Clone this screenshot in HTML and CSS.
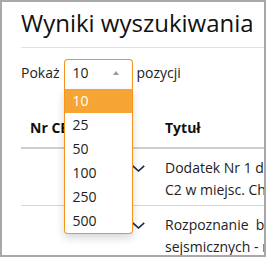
FILE: index.html
```html
<!DOCTYPE html>
<html lang="pl">
<head>
<meta charset="utf-8">
<title>Wyniki wyszukiwania</title>
<link rel="stylesheet" href="styles.css">
</head>
<body>
<main class="page">
  <h1 class="title">Wyniki wyszukiwania</h1>
  <div class="controls">
    <span class="label">Pokaż</span>
    <div class="select">
      <span class="select-value">10</span>
      <span class="caret"></span>
      <ul class="options">
        <li class="option active">10</li>
        <li class="option">25</li>
        <li class="option">50</li>
        <li class="option">100</li>
        <li class="option">250</li>
        <li class="option">500</li>
      </ul>
    </div>
    <span class="label">pozycji</span>
  </div>
  <div class="table">
    <div class="row head">
      <div class="cell first">Nr CBDG</div>
      <div class="cell">Tytuł</div>
    </div>
    <div class="row">
      <div class="cell first toggle">
        <svg class="chev" width="13" height="7" viewBox="0 0 13 7"><polyline points="0.8,0.8 6.5,6 12.2,0.8" fill="none" stroke="#1c2744" stroke-width="1.6"/></svg>
      </div>
      <div class="cell">Dodatek Nr 1 do projektu robót geologicznych<br>C2 w miejsc. Chrzanów</div>
    </div>
    <div class="row">
      <div class="cell first toggle">
        <svg class="chev" width="13" height="7" viewBox="0 0 13 7"><polyline points="0.8,0.8 6.5,6 12.2,0.8" fill="none" stroke="#1c2744" stroke-width="1.6"/></svg>
      </div>
      <div class="cell">Rozpoznanie&nbsp; budowy geologicznej metodą badań<br>sejsmicznych - rejon Chełmno</div>
    </div>
  </div>
</main>
</body>
</html>
```

FILE: styles.css
```css
html, body {
  margin: 0;
  padding: 0;
}
body {
  width: 266px;
  height: 257px;
  box-sizing: border-box;
  border: 2px solid #a9a9a9;
  overflow: hidden;
  background: #fff;
  font-family: "Open Sans", sans-serif;
  font-size: 14px;
  color: #222;
}
.page {
  padding-left: 19px;
  width: 480px;
}
.title {
  margin: 0;
  padding: 6px 0 10px;
  font-size: 24px;
  font-weight: 400;
  line-height: 29px;
  color: #111;
  border-bottom: 1px solid #e2e2e2;
}
.controls {
  display: flex;
  align-items: flex-start;
  gap: 4px;
  margin-top: 11px;
}
.label {
  margin-top: 4px;
  line-height: 20px;
}
.select {
  position: relative;
  width: 67px;
  height: 29px;
  border: 1px solid #f7941d;
  border-bottom: none;
  border-radius: 4px 4px 0 0;
  box-sizing: content-box;
  padding: 0;
  line-height: 20px;
  color: #222;
}
.select-value {
  display: block;
  padding: 3px 0 0 8px;
}
.caret {
  position: absolute;
  right: 13px;
  top: 11px;
  width: 0;
  height: 0;
  border-left: 3.5px solid transparent;
  border-right: 3.5px solid transparent;
  border-bottom: 4px solid #9a9a9a;
}
.options {
  position: absolute;
  top: 29px;
  left: -1px;
  right: -1px;
  margin: 0;
  padding: 0;
  list-style: none;
  background: #fff;
  border: 1px solid #f7941d;
  border-top: none;
  border-radius: 0 0 4px 4px;
  box-shadow: 0 4px 8px rgba(0, 0, 0, 0.16);
  z-index: 5;
}
.option {
  height: 24px;
  line-height: 24px;
  padding-left: 8px;
  color: #222;
}
.option.active {
  background: #f6a534;
  color: #fff;
}
.table {
  margin-top: 20px;
}
.row {
  display: grid;
  grid-template-columns: 136px 1fr;
  border-bottom: 1px solid #d6d6d6;
}
.row.head {
  border-bottom: 2px solid #cfcfcf;
  font-weight: 700;
  color: #111;
}
.cell {
  padding: 8px 8px 4px;
  line-height: 22px;
  white-space: nowrap;
}
.head .cell {
  padding-bottom: 8px;
}
.cell.first {
  padding-left: 9px;
}
.toggle {
  display: flex;
  justify-content: flex-end;
  align-items: flex-start;
  padding-right: 12px;
}
.chev {
  display: block;
  margin-top: 8px;
}
```
